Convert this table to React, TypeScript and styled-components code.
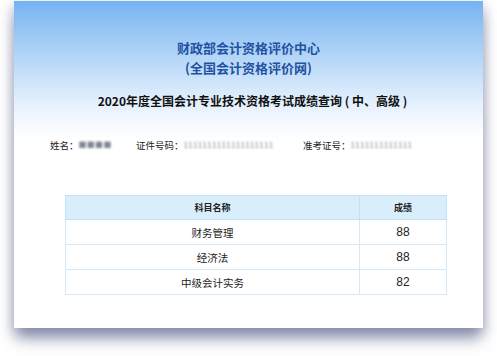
import React from 'react';
import styled, { createGlobalStyle } from 'styled-components';

const GlobalStyle = createGlobalStyle`
	html, body {
		margin: 0;
		padding: 0;
		background: #ffffff;
		width: 497px;
		height: 356px;
		overflow: hidden;
	}
	body {
		font-family: "Noto Sans CJK SC", "Liberation Sans", sans-serif;
	}
`;

const Page = styled.div`
	width: 497px;
	height: 356px;
	padding: 1px 14px 0 14px;
	box-sizing: border-box;
`;

const Card = styled.div`
	width: 469px;
	height: 327px;
	box-sizing: border-box;
	background: linear-gradient(180deg, #76b3f1 0px, #a8cff6 45px, #d8eafc 90px, #f4f9fe 120px, #ffffff 140px);
	box-shadow: 0 13px 14px -2px rgba(90, 100, 140, 0.6), -4px 4px 10px rgba(120, 125, 150, 0.25), 4px 4px 10px rgba(120, 125, 150, 0.25);
	display: flex;
	flex-direction: column;
	align-items: center;
	padding-top: 37px;
`;

const Org = styled.div`
	color: #1f52a3;
	font-size: 13px;
	font-weight: bold;
	line-height: 20px;
	text-align: center;
`;

const Title = styled.div`
	margin-top: 14px;
	padding-left: 8px;
	color: #111111;
	font-size: 12px;
	font-weight: bold;
	line-height: 18px;
	text-align: center;
`;

const InfoRow = styled.div`
	align-self: stretch;
	display: flex;
	margin-top: 28px;
	padding-left: 36px;
	font-size: 9.5px;
	color: #222222;
	line-height: 14px;
`;

const InfoItem = styled.div<{ $width: number }>`
	width: ${(p) => p.$width}px;
	display: flex;
	align-items: center;
	white-space: nowrap;
`;

const Blurred = styled.span`
	display: inline-block;
	color: #7f8794;
	filter: blur(1px);
	letter-spacing: 0.3px;
	font-size: 8px;
`;

const Table = styled.table`
	margin-top: 43px;
	margin-left: 51px;
	align-self: flex-start;
	width: 382px;
	border-collapse: collapse;
	border: 1px solid #cfe5f7;
`;

const HeadCell = styled.th`
	height: 23px;
	padding: 0;
	background: #d9eefb;
	border: 1px solid #c6e1f6;
	font-size: 9px;
	font-weight: bold;
	color: #222222;
`;

const Cell = styled.td<{ $num?: boolean }>`
	height: 24px;
	padding: 0;
	border: 1px solid #d3e8f8;
	text-align: center;
	color: #222222;
	font-size: ${(p) => (p.$num ? '12px' : '10.5px')};
	font-family: ${(p) => (p.$num ? '"Liberation Sans", sans-serif' : 'inherit')};
`;

const rows = [
	{ subject: '财务管理', score: '88' },
	{ subject: '经济法', score: '88' },
	{ subject: '中级会计实务', score: '82' },
];

export default function App() {
	return (
		<Page>
			<GlobalStyle />
			<Card>
				<Org>财政部会计资格评价中心</Org>
				<Org>(全国会计资格评价网)</Org>
				<Title>2020年度全国会计专业技术资格考试成绩查询 ( 中、高级 )</Title>
				<InfoRow>
					<InfoItem $width={86}>
						姓名：<Blurred>■■■■</Blurred>
					</InfoItem>
					<InfoItem $width={167}>
						证件号码：<Blurred>1111111111111111111</Blurred>
					</InfoItem>
					<InfoItem $width={120}>
						准考证号：<Blurred>1111111111111</Blurred>
					</InfoItem>
				</InfoRow>
				<Table>
					<thead>
						<tr>
							<HeadCell style={{ width: 293 }}>科目名称</HeadCell>
							<HeadCell>成绩</HeadCell>
						</tr>
					</thead>
					<tbody>
						{rows.map((r) => (
							<tr key={r.subject}>
								<Cell>{r.subject}</Cell>
								<Cell $num>{r.score}</Cell>
							</tr>
						))}
					</tbody>
				</Table>
			</Card>
		</Page>
	);
}
